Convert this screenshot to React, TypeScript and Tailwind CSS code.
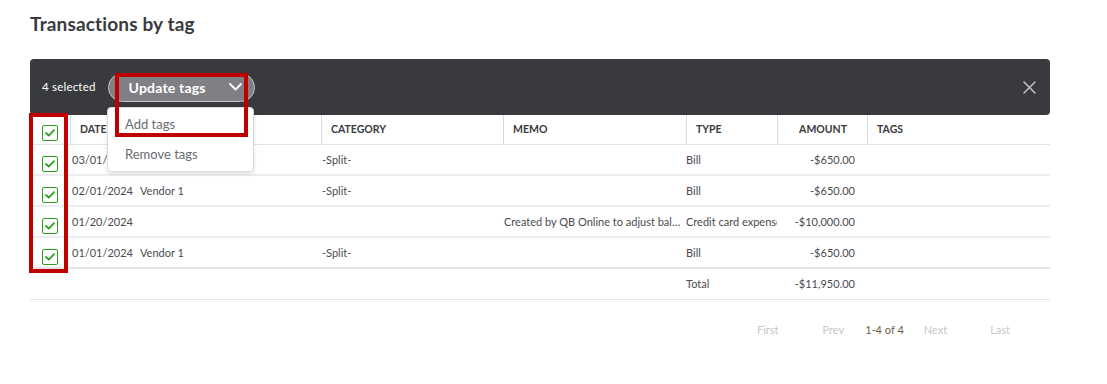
import React from "react";

const Check = () => (
  <div className="w-[16px] h-[16px] border-[1.5px] border-[#2ca01c] rounded-[2px] bg-white flex items-center justify-center">
    <svg width="10" height="8" viewBox="0 0 10 8" fill="none">
      <path d="M1 4 L3.8 6.6 L9 1.2" stroke="#2ca01c" strokeWidth="1.8" strokeLinecap="round" strokeLinejoin="round" />
    </svg>
  </div>
);

type Row = { date: string; name: string; cat: string; memo: string; type: string; amount: string };

const rows: Row[] = [
  { date: "03/01/2024", name: "Vendor 1", cat: "-Split-", memo: "", type: "Bill", amount: "-$650.00" },
  { date: "02/01/2024", name: "Vendor 1", cat: "-Split-", memo: "", type: "Bill", amount: "-$650.00" },
  { date: "01/20/2024", name: "", cat: "", memo: "Created by QB Online to adjust balance", type: "Credit card expense", amount: "-$10,000.00" },
  { date: "01/01/2024", name: "Vendor 1", cat: "-Split-", memo: "", type: "Bill", amount: "-$650.00" },
];

export default function App() {
  return (
    <div className="w-[1107px] h-[384px] bg-white text-[#393a3d] font-['Lato','Noto_Sans',sans-serif] overflow-hidden">
      <div className="pl-[30px] pt-[12px]">
        <h1 className="text-[19px] font-bold leading-[24px] text-[#393a3d] tracking-[0.15px]">Transactions by tag</h1>
        <div className="relative w-[1020px] mt-[23px]">
          {/* action bar */}
          <div className="h-[56px] bg-[#393a3d] rounded-[4px] flex items-center pl-[12px] pr-[14px]">
            <span className="text-white text-[11.5px] tracking-[0.2px]">4 selected</span>
            <div className="ml-[12px] w-[147px] h-[29px] rounded-full bg-[#7f8084] border border-[#c4c5c7] flex items-center pl-[20px] pr-[12px]">
              <span className="text-white font-bold text-[14px] flex-1 tracking-[0.2px]">Update tags</span>
              <svg width="13" height="8" viewBox="0 0 13 8" fill="none">
                <path d="M1 1 L6.5 6.5 L12 1" stroke="#ffffff" strokeWidth="1.8" strokeLinecap="round" strokeLinejoin="round" />
              </svg>
            </div>
            <div className="flex-1" />
            <svg width="13" height="13" viewBox="0 0 13 13" fill="none">
              <path d="M1 1 L12 12 M12 1 L1 12" stroke="#c1c3c7" strokeWidth="1.5" strokeLinecap="round" />
            </svg>
          </div>

          {/* table */}
          <div className="text-[11px]">
            <div className="flex h-[30px] border-b border-[#dfe3e8] items-center font-bold text-[10.5px] text-[#393a3d]">
              <div className="w-[40px] h-full flex items-center pl-[12px] pt-[7px]"><Check /></div>
              <div className="w-[61px] h-full flex items-center pl-[9px] border-l border-[#d3dcea]">DATE</div>
              <div className="w-[190px] h-full flex items-center pl-[9px] border-l border-[#d3dcea]">NAME</div>
              <div className="w-[182px] h-full flex items-center pl-[9px] border-l border-[#d3dcea]">CATEGORY</div>
              <div className="w-[183px] h-full flex items-center pl-[9px] border-l border-[#d3dcea]">MEMO</div>
              <div className="w-[91px] h-full flex items-center pl-[9px] border-l border-[#d3dcea]">TYPE</div>
              <div className="w-[90px] h-full flex items-center justify-end pr-[20px] border-l border-[#d3dcea]">AMOUNT</div>
              <div className="w-[183px] h-full flex items-center pl-[9px] border-l border-[#d3dcea]">TAGS</div>
            </div>
            {rows.map((r, i) => (
              <div key={i} className={`flex h-[31px] items-center pt-[1px] text-[#4a4b50] ${i === rows.length - 1 ? "border-b-2 border-[#e3e5e8]" : "border-b-2 border-[#eceef1]"}`}>
                <div className="w-[40px] pl-[12px] pt-[7px]"><Check /></div>
                <div className="w-[61px] pl-[2px] whitespace-nowrap">{r.date}</div>
                <div className="w-[190px] pl-[9px] whitespace-nowrap">{r.name}</div>
                <div className="w-[182px] pl-[1px] whitespace-nowrap">{r.cat}</div>
                <div className="w-[183px] pl-[1px] pr-[2px] whitespace-nowrap overflow-hidden text-ellipsis">{r.memo}</div>
                <div className="w-[91px] whitespace-nowrap overflow-hidden">{r.type}</div>
                <div className="w-[90px] text-right pr-[12px] whitespace-nowrap">{r.amount}</div>
                <div className="w-[183px]" />
              </div>
            ))}
            <div className="flex h-[31px] items-center pt-[1px] border-b border-[#e3e5e8] text-[#4a4b50]">
              <div className="w-[656px]" />
              <div className="w-[91px]">Total</div>
              <div className="w-[90px] text-right pr-[12px]">-$11,950.00</div>
              <div className="w-[183px]" />
            </div>
          </div>

          {/* pagination */}
          <div className="flex justify-end items-center h-[20px] mt-[20px] pr-[40px] text-[11px] text-[#c6c7ca]">
            <span>First</span>
            <span className="ml-[44px]">Prev</span>
            <span className="ml-[21px] text-[#6b5f4a]">1-4 of 4</span>
            <span className="ml-[20px]">Next</span>
            <span className="ml-[43px]">Last</span>
          </div>

          {/* dropdown menu */}
          <div className="absolute left-[77px] top-[48px] w-[147px] h-[65px] bg-white border border-[#dcdde0] rounded-[4px] shadow-[0_2px_4px_rgba(0,0,0,0.12)] flex flex-col justify-center text-[13px] text-[#6b6c72]">
            <div className="h-[30px] flex items-center pl-[17px]">Add tags</div>
            <div className="h-[30px] flex items-center pl-[17px]">Remove tags</div>
          </div>

          {/* annotation boxes */}
          <div className="absolute left-[85px] top-[14px] w-[133px] h-[64px] border-[4px] border-[#c00000]" />
          <div className="absolute left-[-1px] top-[54px] w-[39px] h-[160px] border-[4px] border-[#c00000]" />
        </div>
      </div>
    </div>
  );
}
